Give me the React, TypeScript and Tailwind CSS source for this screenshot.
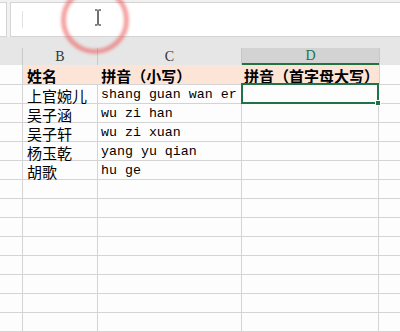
const COLS = ['w-[23px]', 'w-[75px]', 'w-[144px]', 'w-[137px]', 'w-[21px]']

const ROWS: [string, string][] = [
  ['上官婉儿', 'shang guan wan er'],
  ['吴子涵', 'wu zi han'],
  ['吴子轩', 'wu zi xuan'],
  ['杨玉乾', 'yang yu qian'],
  ['胡歌', 'hu ge'],
  ['', ''],
  ['', ''],
  ['', ''],
  ['', ''],
  ['', ''],
  ['', ''],
  ['', ''],
  ['', ''],
]

const cjk = "font-['Noto_Sans_CJK_SC',sans-serif]"
const mono = "font-['Liberation_Mono','Noto_Sans_CJK_SC',monospace]"

export default function App() {
  return (
    <div className="relative w-[400px] h-[332px] overflow-hidden bg-[#fdfdfd] text-black">
      {/* formula bar */}
      <div className="flex h-[37px] bg-[#f1f1f1] pt-[2px] gap-[3px]">
        <div className="w-[7px] h-[35px] bg-white border border-l-0 border-[#d4d4d4]" />
        <div className="flex-1 h-[35px] bg-white border border-r-0 border-[#d4d4d4] flex items-center pl-[11px]">
          <div className="w-px h-[17px] bg-[#e2e2e2]" />
        </div>
      </div>
      <div className="h-[11px] bg-[#e6e6e6]" />

      {/* column headers */}
      <div className="flex h-[17px] bg-[#e6e6e6] text-[14px] text-[#333] font-['Liberation_Serif',serif]">
        <div className={`${COLS[0]} border-r border-[#c8c8c8]`} />
        <div className={`${COLS[1]} border-r border-[#c8c8c8] flex items-center justify-center`}>B</div>
        <div className={`${COLS[2]} border-r border-[#c8c8c8] flex items-center justify-center`}>C</div>
        <div className={`${COLS[3]} bg-[#d3d3d3] border-b-2 border-[#217346] flex items-center justify-center text-[#217346]`}>D</div>
        <div className={`${COLS[4]} border-l border-[#c8c8c8]`} />
      </div>

      {/* row 1 */}
      <div className={`flex h-[20px] border-b border-[#d4d4d4] text-[15px] font-bold leading-none ${cjk}`}>
        <div className={`${COLS[0]} border-r border-[#d4d4d4]`} />
        <div className="w-[356px] bg-[#fce4d6] flex items-center whitespace-nowrap pt-[1px]">
          <span className="w-[75px] pl-[4px]">姓名</span>
          <span className="w-[144px] pl-[4px]">拼音（小写）</span>
          <span className="pl-[4px]">拼音（首字母大写）</span>
        </div>
        <div className={`${COLS[4]} border-l border-[#d4d4d4]`} />
      </div>

      {ROWS.map(([name, py], i) => (
        <div key={i} className="flex h-[19px] border-b border-[#d4d4d4]">
          <div className={`${COLS[0]} border-r border-[#d4d4d4]`} />
          <div className={`${COLS[1]} border-r border-[#d4d4d4] pl-[4px] pt-[2px] flex items-center text-[15px] leading-none ${cjk}`}>{name}</div>
          <div className={`${COLS[2]} border-r border-[#d4d4d4] pl-[3px] pt-[1px] flex items-center text-[13.3px] leading-none whitespace-nowrap ${mono}`}>{py}</div>
          <div className={`${COLS[3]} border-r border-[#d4d4d4]`} />
          <div className={COLS[4]} />
        </div>
      ))}

      {/* selected cell D2 */}
      <div className="absolute left-[241px] top-[83px] w-[138px] h-[21px] border-2 border-[#217346]" />
      <div className="absolute left-[375px] top-[100px] w-[6px] h-[6px] bg-[#217346] border border-white" />

      {/* cursor highlight */}
      <div className="absolute left-[61px] top-[-14px] w-[68px] h-[68px] rounded-full border-[5px] border-[rgba(236,85,85,0.55)] blur-[1.5px]" />
      <svg className="absolute left-[94px] top-[9px]" width="8" height="17" viewBox="0 0 8 17">
        <path d="M1 1h2.5M4.5 1H7M4 1.5v14M1 16h2.5M4.5 16H7" stroke="#111" strokeWidth="1.2" fill="none" />
      </svg>
    </div>
  )
}
